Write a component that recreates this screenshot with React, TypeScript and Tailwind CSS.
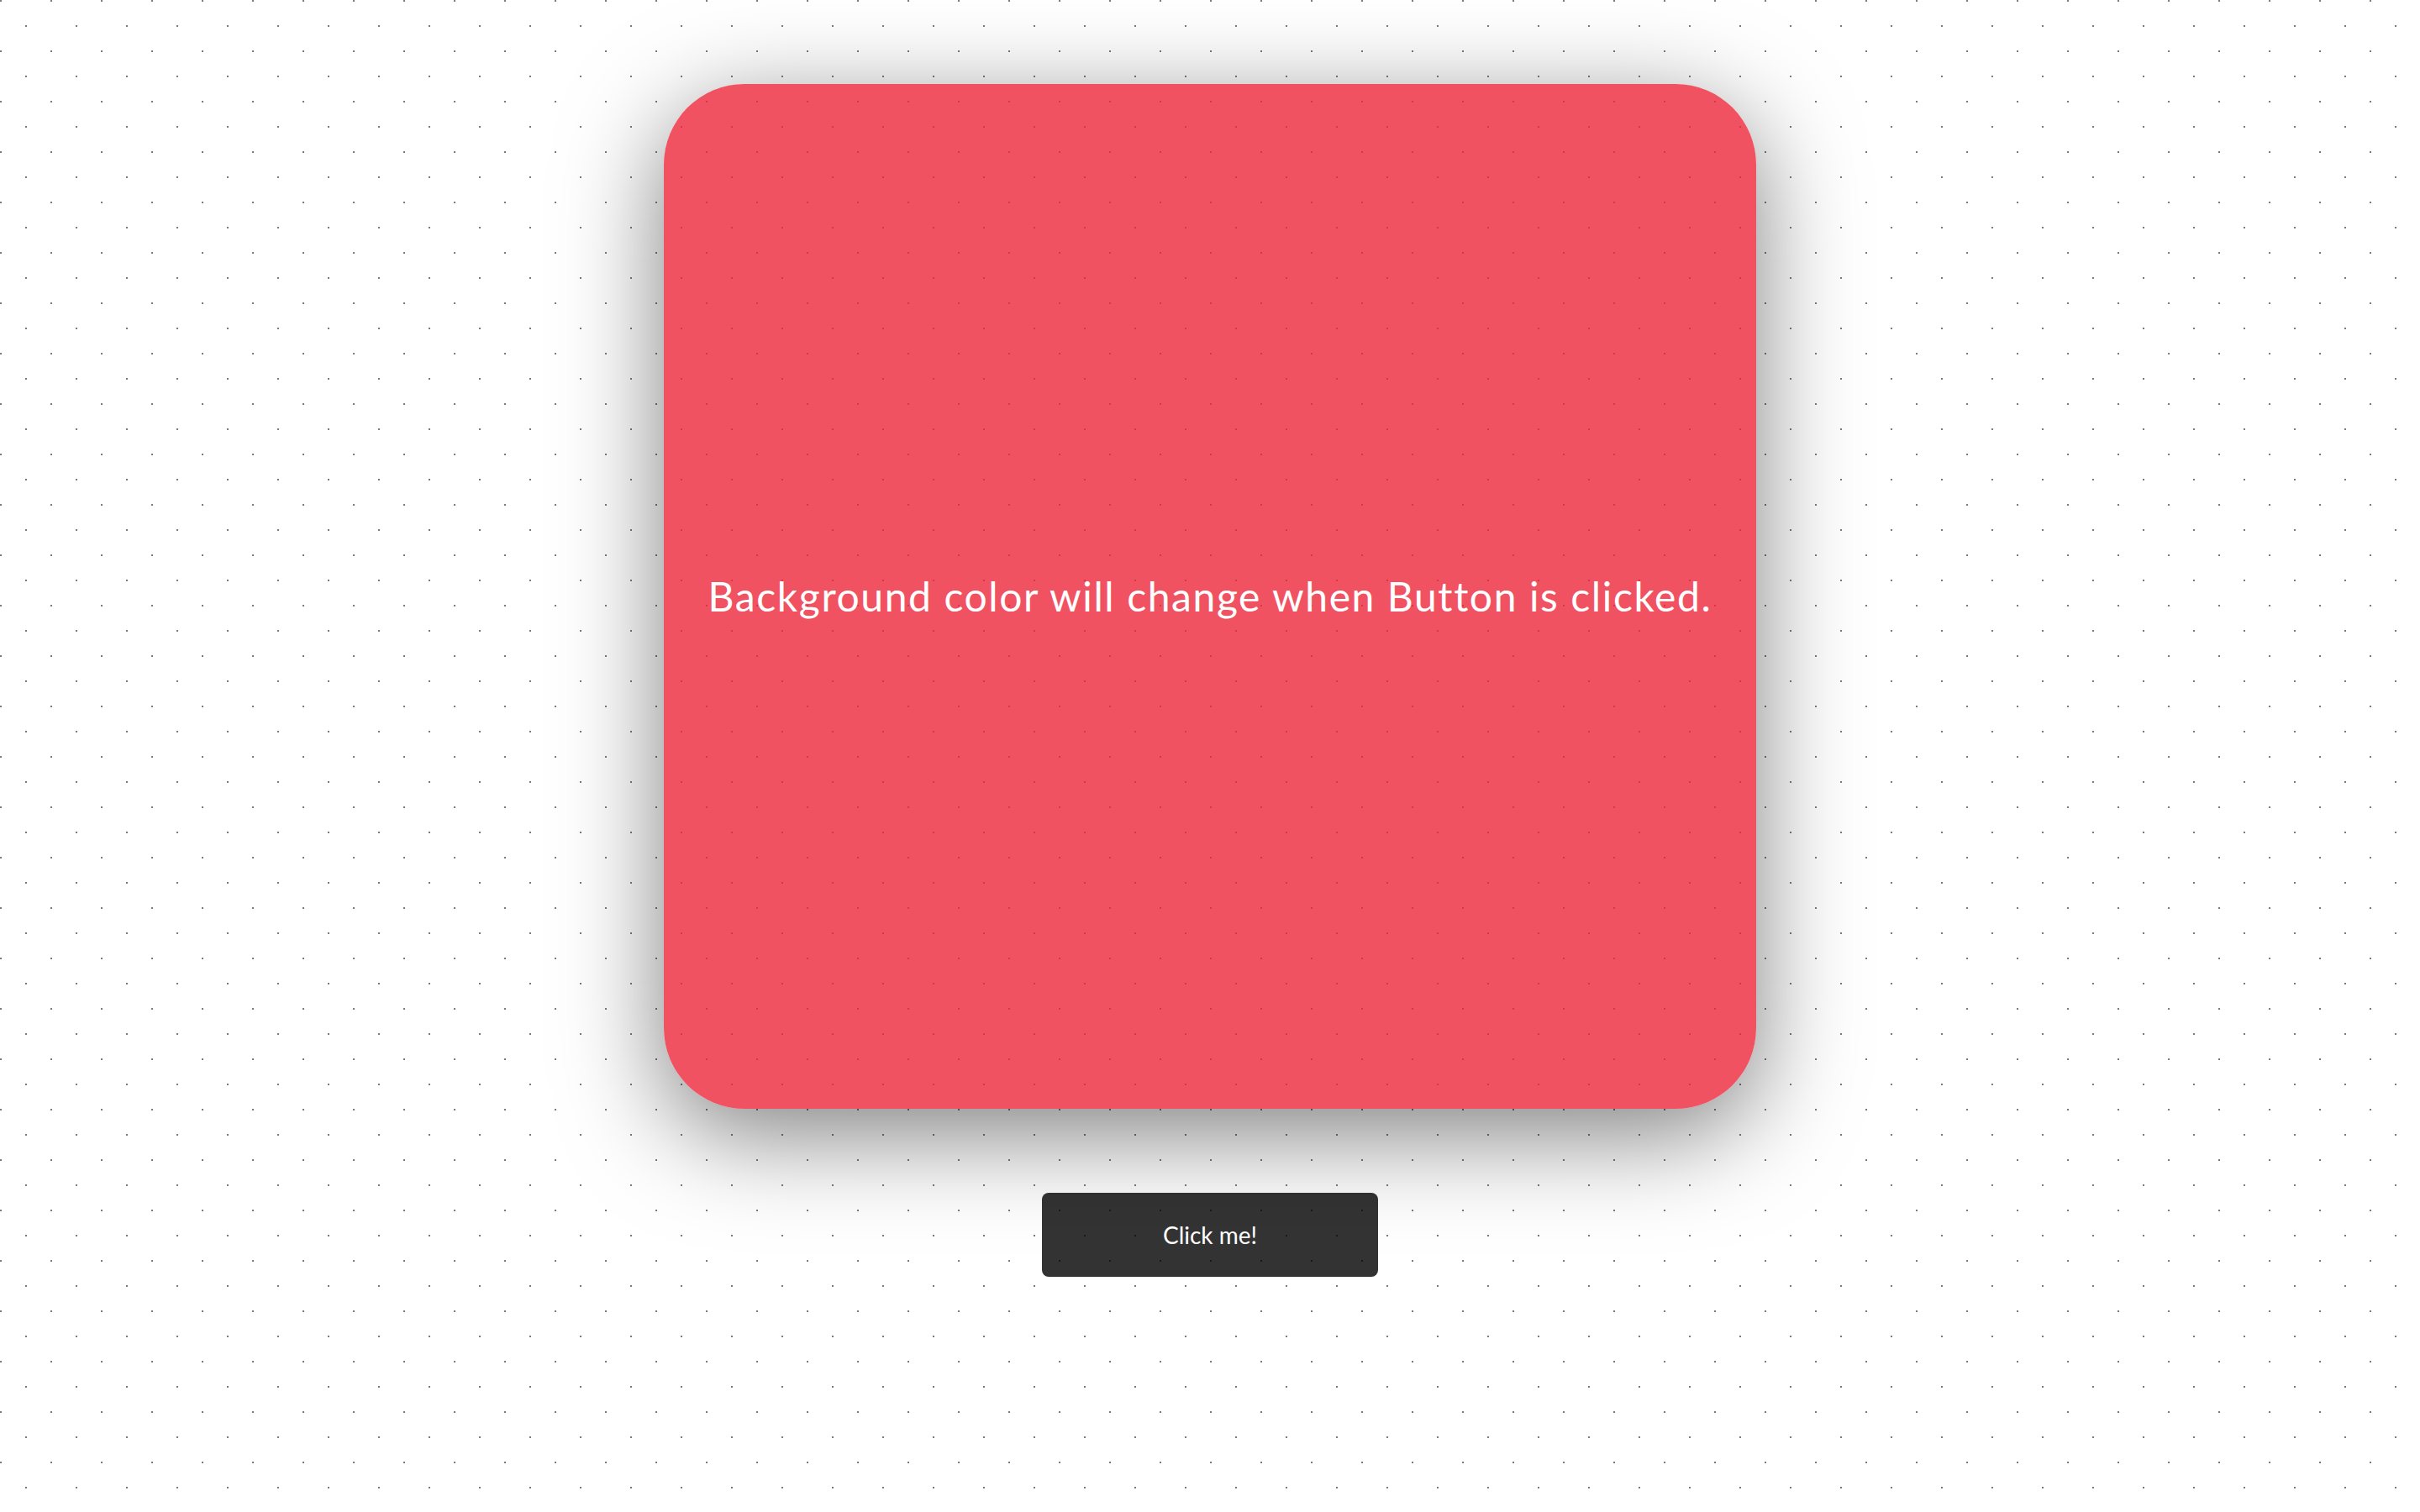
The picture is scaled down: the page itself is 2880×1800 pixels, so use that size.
import { useState } from "react";

const colors = [
  "bg-[rgba(236,39,59,0.8)]",
  "bg-[rgba(37,99,235,0.8)]",
  "bg-[rgba(22,163,74,0.8)]",
  "bg-[rgba(147,51,234,0.8)]",
];

export default function App() {
  const [index, setIndex] = useState(0);

  return (
    // Dotted canvas behind everything; card and button are see-through so the dots show.
    <div className="min-h-screen w-full bg-white bg-[image:radial-gradient(circle_at_1px_1px,#7a7a7a_1.2px,transparent_1.2px),radial-gradient(circle_at_31px_31px,#7a7a7a_1.2px,transparent_1.2px)] bg-[length:60px_60px] font-['Lato','Noto_Sans',sans-serif]">
      <div className="flex flex-col items-center gap-[100px] pt-[100px]">
        <div
          className={`flex h-[1220px] w-[1300px] items-center justify-center rounded-[96px] shadow-[0_30px_120px_rgba(0,0,0,0.5)] ${colors[index]}`}
        >
          <p className="text-[48px] tracking-[1.6px] text-white">Background color will change when Button is clicked.</p>
        </div>
        <button
          type="button"
          onClick={() => setIndex((index + 1) % colors.length)}
          className="h-[100px] w-[400px] rounded-lg bg-[rgba(0,0,0,0.8)] text-[28px] text-white"
        >
          Click me!
        </button>
      </div>
    </div>
  );
}
